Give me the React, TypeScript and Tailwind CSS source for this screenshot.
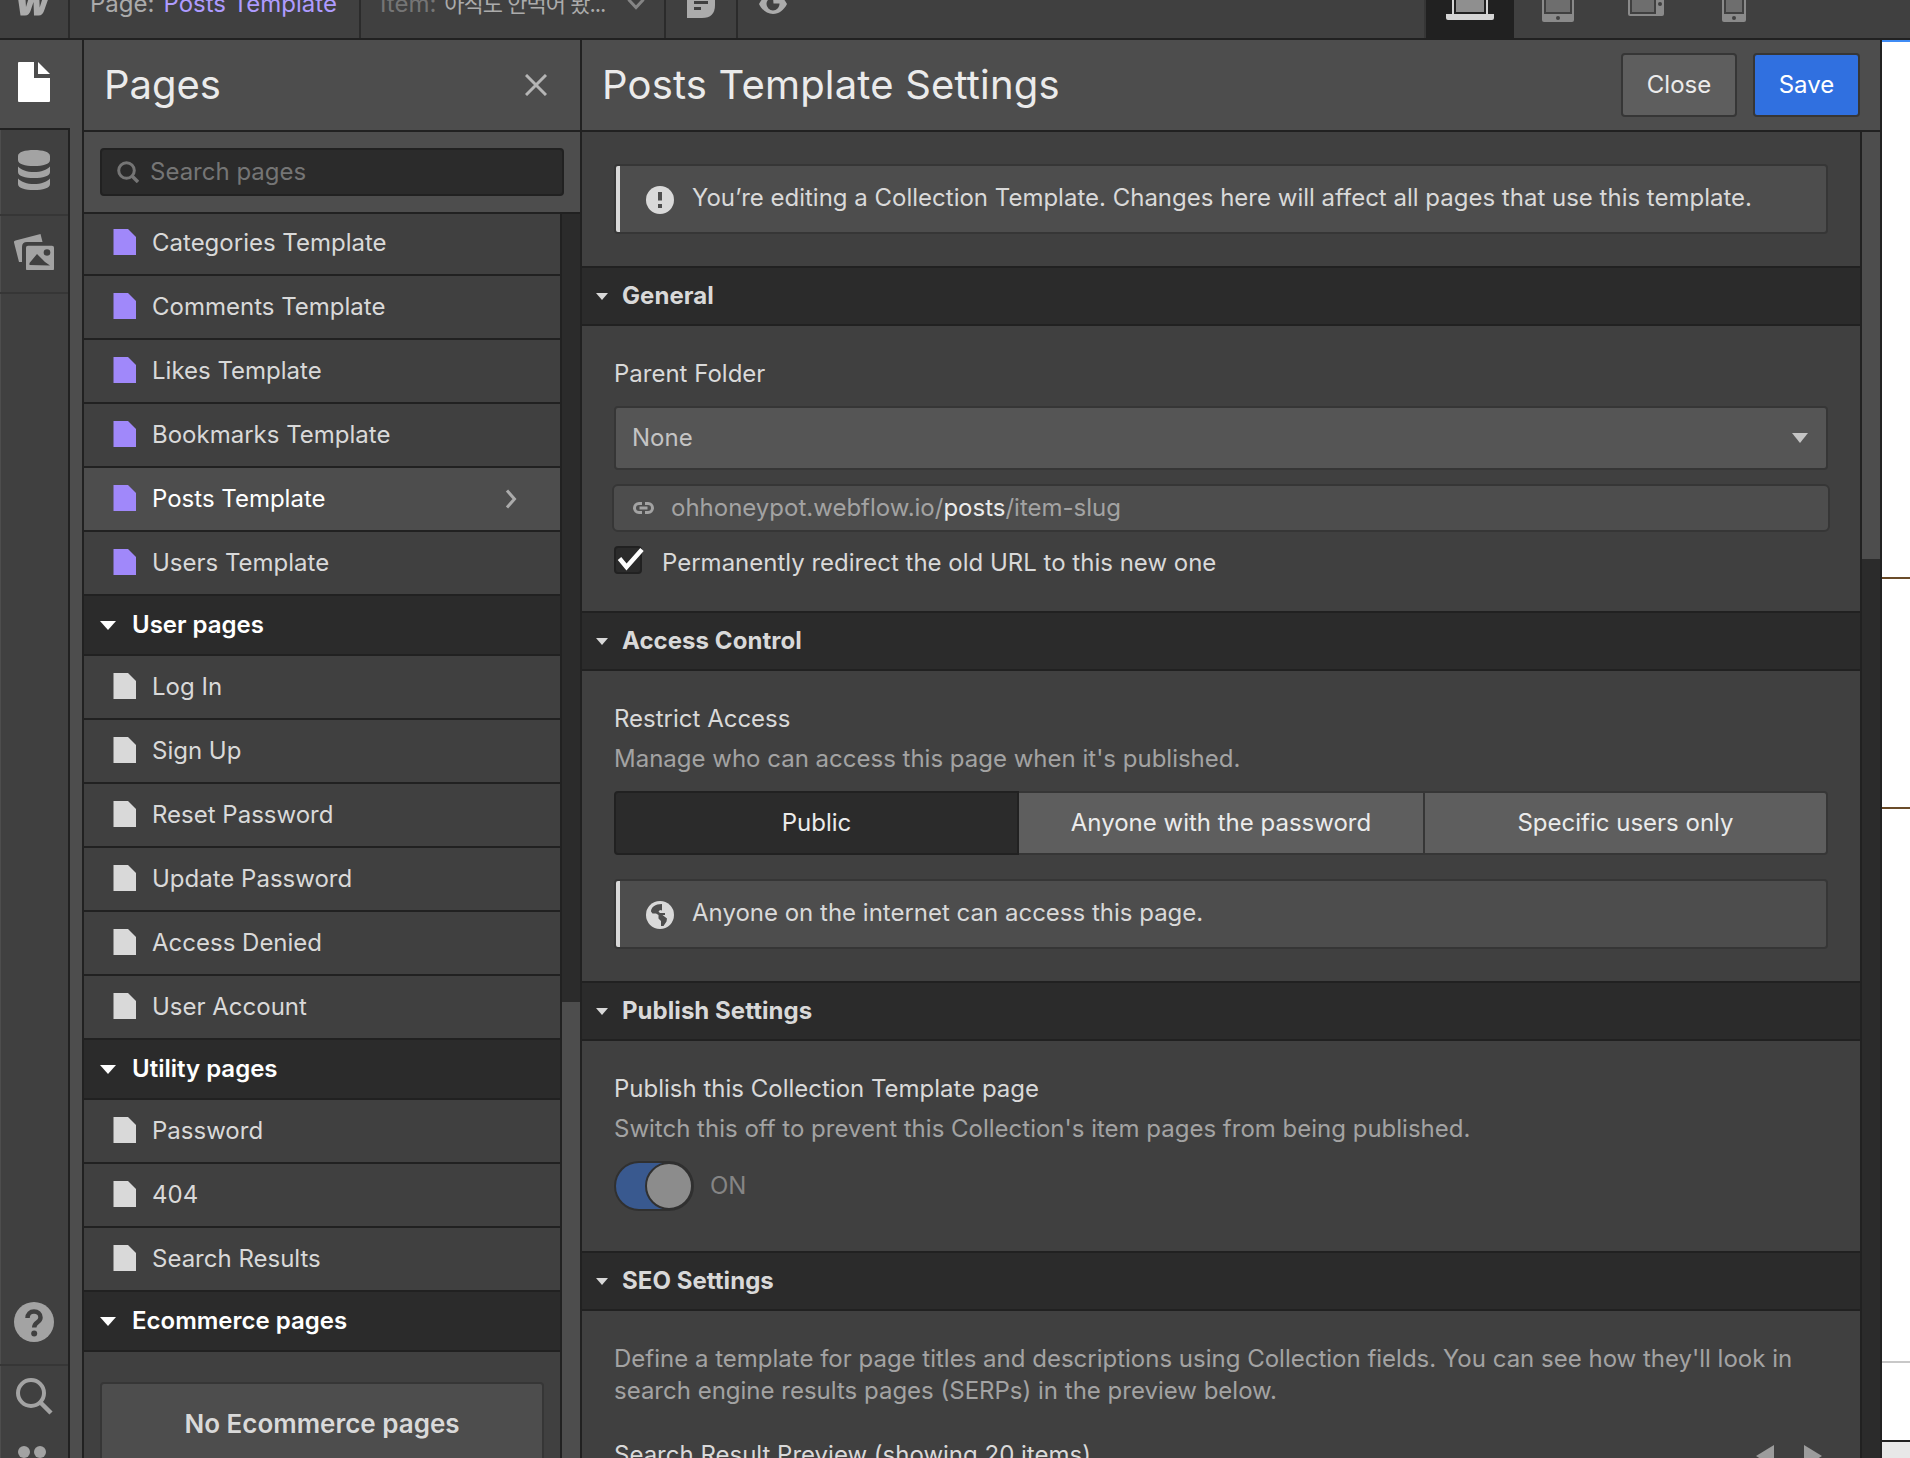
import React from "react";

interface PageRowProps {
  label: string;
  template?: boolean;
  active?: boolean;
}

const TEMPLATE_PAGES = [
  "Categories Template",
  "Comments Template",
  "Likes Template",
  "Bookmarks Template",
  "Posts Template",
  "Users Template",
];

const USER_PAGES = [
  "Log In",
  "Sign Up",
  "Reset Password",
  "Update Password",
  "Access Denied",
  "User Account",
];

const UTILITY_PAGES = ["Password", "404", "Search Results"];

const PageRow: React.FC<PageRowProps> = ({ label, template, active }) => (
  <div
    className={`flex h-16 shrink-0 items-center border-b-2 border-[#212121] pl-[29px] pr-[43px] ${
      active ? "bg-[#4d4d4d] text-white" : "bg-[#404040] text-[#d9d9d9]"
    }`}
  >
    <svg
      width="23"
      height="26"
      viewBox="0 0 23 26"
      className={`-mt-[2px] ${template ? "text-[#a088fa]" : "text-[#d9d9d9]"}`}
    >
      <path d="M.5 0H15l8 8v18H.5z" fill="currentColor" />
    </svg>
    <span className="ml-4 flex-1">{label}</span>
    {active && (
      <svg width="12" height="20" viewBox="0 0 12 20" className="text-[#ababab]">
        <path
          d="M2 1.500l7.500 8.500L2 18.500"
          fill="none"
          stroke="currentColor"
          strokeWidth="3"
        />
      </svg>
    )}
  </div>
);

const GroupHeader: React.FC<{ label: string }> = ({ label }) => (
  <div className="flex h-[60px] shrink-0 items-center border-b-2 border-[#212121] bg-[#2b2b2b] pl-4 font-semibold text-white">
    <svg width="16" height="9" viewBox="0 0 16 9">
      <path d="M0 0h16L8 9z" fill="currentColor" />
    </svg>
    <span className="ml-4">{label}</span>
  </div>
);

const SectionHeader: React.FC<{ label: string }> = ({ label }) => (
  <div className="flex h-[60px] shrink-0 items-center border-y-2 border-[#212121] bg-[#2b2b2b] pl-[14px] font-bold tracking-[0.05px] text-[#d9d9d9]">
    <svg width="12" height="7" viewBox="0 0 12 7">
      <path d="M0 0h12L6 7z" fill="currentColor" />
    </svg>
    <span className="ml-[14px]">{label}</span>
  </div>
);

const Notice: React.FC<{ icon: React.ReactNode; children: React.ReactNode }> = ({
  icon,
  children,
}) => (
  <div className="flex h-[70px] shrink-0 overflow-hidden rounded-[4px] border-2 border-[#363636] bg-[#4d4d4d] text-[#d9d9d9]">
    <div className="w-1 bg-[#d9d9d9]" />
    <div className="flex flex-1 items-center pl-[26px]">
      <div className="mt-[2px]">{icon}</div>
      <span className="-mt-[2px] ml-[18px]">{children}</span>
    </div>
  </div>
);

const AlertIcon = () => (
  <svg width="28" height="28" viewBox="0 0 28 28">
    <circle cx="14" cy="14" r="14" fill="#d9d9d9" />
    <path d="M12 6h4v8.500h-4zM12 18h4v4h-4z" fill="#4d4d4d" />
  </svg>
);

const GlobeIcon = () => (
  <svg width="28" height="28" viewBox="0 0 28 28">
    <circle cx="14" cy="14" r="14" fill="#d9d9d9" />
    <path
      d="M5 10.500C5 6.500 9 3 16 3v6.500l-2-.5-1.500 1.500 1.500 1.500h5v2h-2.500l4.500 3.500-.500 3L17.500 25H15v-5l-2.500-2.500V14L10 12.500H6.500z"
      fill="#4d4d4d"
    />
  </svg>
);

const TopBar = () => (
  <div className="h-10 shrink-0 overflow-hidden border-b-2 border-[#212121] bg-[#404040]">
    <div className="-mt-[30px] flex h-[68px] items-center text-[#ababab]">
      <div className="flex h-full w-[70px] items-center border-r-2 border-[#2b2b2b] pl-[17px]">
        <svg width="35" height="26" viewBox="0 0 35 26" className="mt-[-3px]">
          <path
            d="M25.500 8.500l-2.800 9L22 1h-3.500c-3.500 0-5 2-6 4.500L9 17 8.300 6C8 3 5.800 1 3 1H0l3.500 24.500H8c3 0 4.500-2 5.500-4.500l3-9 .5 13.500h4.500c3 0 4.500-2 5.500-4.500L34 1h-3.500c-3 0-4 3-5 7.500z"
            fill="currentColor"
          />
        </svg>
      </div>
      <div className="flex h-full w-[291px] items-center border-r-2 border-[#2b2b2b] pl-5">
        <span>Page:</span>
        <span className="ml-[9px] text-[#ae9bff]">Posts Template</span>
      </div>
      <div className="flex h-full w-[305px] items-center border-r-2 border-[#2b2b2b] pl-[19px]">
        <span className="text-[#757575]">Item:</span>
        <span className="ml-[8px] w-[166px] whitespace-nowrap text-[22px] tracking-[-1px]">
          아직도 안먹어 봤...
        </span>
        <svg width="18" height="12" viewBox="0 0 18 12" className="ml-[17px] mt-[-1px]">
          <path d="M1.500 1.500L9 9.500l7.500-8" fill="none" stroke="#858585" strokeWidth="3" />
        </svg>
      </div>
      <div className="flex h-full w-[72px] items-center border-r-2 border-[#2b2b2b] pl-[21px]">
        <svg width="28" height="28" viewBox="0 0 28 28">
          <path d="M2 0h20q6 0 6 6v9q0 13-13 13H0V2q0-2 2-2z" fill="currentColor" />
          <path d="M7 5h14v3H7zM7 11h14v3H7zM7 17h7v3H7z" fill="#404040" />
        </svg>
      </div>
      <div className="flex-1 pl-[21px]">
        <svg width="28" height="20" viewBox="0 0 28 20">
          <path
            d="M14 0C8 0 3 4 0 10c3 6 8 10 14 10s11-4 14-10C25 4 20 0 14 0zm0 16.500a6.500 6.500 0 01-6.500-6.500c0-3.600 2.900-6.500 6.500-6.500l.5 6h6c0 4-2.900 7-6.500 7z"
            fill="currentColor"
          />
        </svg>
      </div>
      <div className="flex h-full w-[486px]">
        <div className="flex h-full w-[90px] items-center justify-center border-l-2 border-[#363636] bg-[#212121]">
          <svg width="48" height="32" viewBox="0 0 48 32">
            <path d="M6 0h36v26h6v4q0 2-2 2H2q-2 0-2-2v-4h6z" fill="#d5d5d5" />
            <path d="M8 2h32v24H8z" fill="#212121" />
            <path d="M10 4h28v20H10z" fill="#8f8f8f" />
          </svg>
        </div>
        <div className="flex flex-1 items-center pl-[28px]">
          <svg width="32" height="40" viewBox="0 0 32 40" className="-mt-1">
            <rect width="32" height="40" rx="2" fill="#8a8a8a" />
            <path d="M2 6h28v26H2z" fill="#404040" />
            <path d="M4 8h24v22H4z" fill="#6e6e6e" />
            <circle cx="16" cy="36" r="2" fill="#404040" />
          </svg>
          <svg width="36" height="28" viewBox="0 0 36 28" className="ml-[54px] mt-[-4px]">
            <rect width="36" height="28" rx="2" fill="#8a8a8a" />
            <path d="M2 2h26v24H2z" fill="#404040" />
            <path d="M4 4h22v20H4z" fill="#6e6e6e" />
            <circle cx="32" cy="16" r="2" fill="#404040" />
          </svg>
          <svg width="24" height="40" viewBox="0 0 24 40" className="-mt-1 ml-[58px]">
            <rect width="24" height="40" rx="2" fill="#8a8a8a" />
            <path d="M2 6h20v26H2z" fill="#404040" />
            <path d="M4 8h16v22H4z" fill="#6e6e6e" />
            <circle cx="12" cy="36" r="2" fill="#404040" />
          </svg>
        </div>
      </div>
    </div>
  </div>
);

const Rail = () => (
  <div className="flex w-[84px] shrink-0 flex-col border-r-2 border-[#212121] bg-[#4d4d4d] text-[#a3a3a3]">
    <div className="flex h-[88px] shrink-0 items-center pl-[18px] text-white">
      <svg width="32" height="40" viewBox="0 0 32 40" className="mt-[-4px]">
        <path d="M1 0h15v16h16v23q0 1-1 1H1q-1 0-1-1V1q0-1 1-1z" fill="currentColor" />
        <path d="M20 0l12 12H20z" fill="currentColor" />
      </svg>
    </div>
    <div className="flex w-[70px] flex-1 flex-col border-r-2 border-t-2 border-[#212121] bg-[#404040] shadow-[inset_1px_0_#4d4d4d]">
      <div className="flex h-[86px] shrink-0 items-center border-b-2 border-[#363636] pl-[18px]">
        <svg width="32" height="40" viewBox="0 0 32 40" className="mt-[-4px]">
          <path
            d="M0 6C0 2 7 0 16 0s16 2 16 6v4c0 4-7 6-16 6S0 14 0 10zM0 16.500C3 20 9 22 16 22s13-2 16-5.500V22c0 4-7 6-16 6S0 26 0 22zM0 28.500C3 32 9 34 16 34s13-2 16-5.500V34c0 4-7 6-16 6S0 38 0 34z"
            fill="currentColor"
          />
        </svg>
      </div>
      <div className="flex h-[78px] shrink-0 items-center border-b-2 border-[#363636] pl-[14px]">
        <svg width="40" height="36" viewBox="0 0 40 36" className="mt-[-4px]">
          <path d="M1.500 6.500L26.500 0l2 8H13q-5 0-5 5v15H5L0 8.500q-.5-1.500 1.500-2z" fill="currentColor" />
          <path
            d="M14 12h24q2 0 2 2v26q0 2-2 2H14q-2 0-2-2V14q0-2 2-2z"
            transform="translate(0 2) scale(1 .82)"
            fill="currentColor"
          />
          <path d="M15.500 31v-2L23 20l5 5 3 3 5 3.500z" fill="#404040" />
          <circle cx="33" cy="18.500" r="3.300" fill="#404040" />
        </svg>
      </div>
      <div className="flex-1" />
      <div className="flex h-[86px] shrink-0 items-center border-b-2 border-[#363636] pl-[14px]">
        <svg width="40" height="40" viewBox="0 0 40 40">
          <circle cx="20" cy="20" r="20" fill="currentColor" />
          <path
            d="M13.500 16c0-4 2.700-6.500 6.500-6.500s6.500 2.500 6.500 6c0 5-6.300 4.500-6.300 10"
            fill="none"
            stroke="#404040"
            strokeWidth="4.500"
          />
          <circle cx="20.200" cy="31.500" r="3" fill="#404040" />
        </svg>
      </div>
      <div className="flex h-[92px] shrink-0 flex-col overflow-hidden pl-[16px] pt-3">
        <svg width="37" height="37" viewBox="0 0 37 37" className="shrink-0">
          <circle cx="15" cy="15" r="13" fill="none" stroke="currentColor" strokeWidth="4" />
          <path d="M24 24l11 11" stroke="currentColor" strokeWidth="4.500" />
        </svg>
        <svg width="40" height="30" viewBox="0 0 40 30" className="mt-[31px] shrink-0">
          <circle cx="8" cy="6" r="6" fill="currentColor" />
          <circle cx="24" cy="6" r="6" fill="currentColor" />
        </svg>
      </div>
    </div>
  </div>
);

const PagesPanel = () => (
  <div className="flex w-[498px] shrink-0 flex-col border-r-2 border-[#212121] bg-[#404040]">
    <div className="flex h-[92px] shrink-0 items-center justify-between border-b-2 border-[#212121] bg-[#4d4d4d] pl-5 pr-[33px]">
      <h1 className="text-[40px] text-[#ebebeb]">Pages</h1>
      <svg width="22" height="22" viewBox="0 0 22 22">
        <path d="M1 1l20 20M21 1L1 21" stroke="#b5b5b5" strokeWidth="3" />
      </svg>
    </div>
    <div className="z-10 h-[82px] shrink-0 border-b-2 border-[#212121] bg-[#4d4d4d] px-4 pt-4">
      <div className="flex h-12 items-center rounded-[4px] border-2 border-[#212121] bg-[#2b2b2b] pl-[15px]">
        <svg width="22" height="22" viewBox="0 0 22 22">
          <circle cx="9.500" cy="9.500" r="7.800" fill="none" stroke="#757575" strokeWidth="3" />
          <path d="M15 15l6 6" stroke="#757575" strokeWidth="3.500" />
        </svg>
        <span className="ml-[11px] text-[#757575]">Search pages</span>
      </div>
    </div>
    <div className="-mt-[2px] flex min-h-0 flex-1">
      <div className="flex w-[478px] shrink-0 flex-col overflow-hidden border-r-2 border-[#212121]">
        {TEMPLATE_PAGES.map((p) => (
          <PageRow key={p} label={p} template active={p === "Posts Template"} />
        ))}
        <GroupHeader label="User pages" />
        {USER_PAGES.map((p) => (
          <PageRow key={p} label={p} />
        ))}
        <GroupHeader label="Utility pages" />
        {UTILITY_PAGES.map((p) => (
          <PageRow key={p} label={p} />
        ))}
        <GroupHeader label="Ecommerce pages" />
        <div className="shrink-0 px-4 pt-[30px]">
          <div className="h-[120px] rounded-[4px] border-2 border-[#363636] bg-[#4d4d4d] pt-6 text-center text-[26px] leading-8 font-semibold text-[#d9d9d9]">
            No Ecommerce pages
          </div>
        </div>
      </div>
      <div className="flex flex-1 flex-col bg-[#2b2b2b]">
        <div className="mt-[790px] flex-1 bg-[#4d4d4d]" />
      </div>
    </div>
  </div>
);

const SettingsPanel = () => (
  <div className="flex w-[1300px] shrink-0 flex-col border-r-2 border-[#212121] bg-[#404040]">
    <div className="flex h-[92px] shrink-0 items-center border-b-2 border-[#212121] bg-[#4d4d4d] pl-5 pr-5">
      <h2 className="flex-1 text-[40px] tracking-[0.18px] text-[#ebebeb]">
        Posts Template Settings
      </h2>
      <button className="h-16 w-[116px] rounded-[4px] border-2 border-[#363636] bg-[#5e5e5e] text-[#ebebeb]">
        Close
      </button>
      <button className="ml-4 h-16 w-[107px] rounded-[4px] border-2 border-[#363636] bg-[#3070e0] text-white">
        Save
      </button>
    </div>
    <div className="flex min-h-0 flex-1">
      <div className="flex w-[1280px] shrink-0 flex-col overflow-hidden border-r-2 border-[#212121]">
        <div className="px-8 py-8">
          <Notice icon={<AlertIcon />}>
            You’re editing a Collection Template. Changes here will affect all pages that use this
            template.
          </Notice>
        </div>

        <SectionHeader label="General" />
        <div className="h-[285px] shrink-0 px-8 pt-8 text-[#d9d9d9]">
          <div className="leading-8">Parent Folder</div>
          <div className="mt-4 flex h-16 items-center justify-between rounded-[4px] border-2 border-[#363636] bg-[#555555] pl-4 pr-[18px] text-[#c4c4c4]">
            <span>None</span>
            <svg width="16" height="10" viewBox="0 0 16 10">
              <path d="M0 0h16L8 10z" fill="currentColor" />
            </svg>
          </div>
          <div className="-mx-[2px] mt-[14px] flex h-12 items-center rounded-[6px] border-2 border-[#363636] bg-[#4d4d4d] pl-[19px] text-[#a3a3a3]">
            <svg width="21" height="12" viewBox="0 0 21 12">
              <path
                d="M9 1.500H6a4.500 4.500 0 000 9h3M12 1.500h3a4.500 4.500 0 010 9h-3M6.500 6h8"
                fill="none"
                stroke="currentColor"
                strokeWidth="3"
              />
            </svg>
            <span className="ml-[17px]">
              ohhoneypot.webflow.io/<span className="text-[#ebebeb]">posts</span>/item-slug
            </span>
          </div>
          <div className="mt-[14px] flex">
            <div className="h-7 w-7 rounded-[4px] border-2 border-[#212121] bg-[#2b2b2b]">
              <svg width="28" height="24" viewBox="0 0 28 24" className="overflow-visible">
                <path d="M3.500 10.500l7 8.500L26 1.500" fill="none" stroke="#fff" strokeWidth="4.500" />
              </svg>
            </div>
            <span className="ml-5 mt-px leading-8">
              Permanently redirect the old URL to this new one
            </span>
          </div>
        </div>

        <SectionHeader label="Access Control" />
        <div className="h-[310px] shrink-0 px-8 pt-8">
          <div className="leading-8 text-[#d9d9d9]">Restrict Access</div>
          <div className="mt-2 leading-8 text-[#a3a3a3]">
            Manage who can access this page when it's published.
          </div>
          <div className="mt-4 flex h-16 text-[#ebebeb]">
            <button className="w-[405px] rounded-l-[4px] border-2 border-[#212121] bg-[#2b2b2b]">
              Public
            </button>
            <button className="w-[406px] border-y-2 border-r-2 border-[#363636] bg-[#5e5e5e]">
              Anyone with the password
            </button>
            <button className="flex-1 rounded-r-[4px] border-y-2 border-r-2 border-[#363636] bg-[#5e5e5e]">
              Specific users only
            </button>
          </div>
          <div className="mt-6">
            <Notice icon={<GlobeIcon />}>Anyone on the internet can access this page.</Notice>
          </div>
        </div>

        <SectionHeader label="Publish Settings" />
        <div className="h-[210px] shrink-0 px-8 pt-8">
          <div className="leading-8 text-[#d9d9d9]">Publish this Collection Template page</div>
          <div className="mt-2 leading-8 text-[#a3a3a3]">
            Switch this off to prevent this Collection's item pages from being published.
          </div>
          <div className="mt-4 flex items-center text-[#858585]">
            <div className="flex h-[50px] w-20 items-center justify-end rounded-full border-2 border-[#303030] bg-[#39598f]">
              <div className="-mr-px h-12 w-12 shrink-0 rounded-full border-2 border-[#303030] bg-[#8c8c8c]" />
            </div>
            <span className="ml-4">ON</span>
          </div>
        </div>

        <SectionHeader label="SEO Settings" />
        <div className="shrink-0 px-8 pt-8">
          <div className="leading-8 text-[#a3a3a3]">
            Define a template for page titles and descriptions using Collection fields. You can see
            how they'll look in
            <br />
            search engine results pages (SERPs) in the preview below.
          </div>
          <div className="mt-8 flex justify-between pr-[6px] leading-8 text-[#d9d9d9]">
            <span>Search Result Preview (showing 20 items)</span>
            <div className="mt-[6px] flex gap-[30px]">
              <svg width="18" height="22" viewBox="0 0 18 22">
                <path d="M18 0v22L0 11z" fill="#9c9c9c" />
              </svg>
              <svg width="18" height="22" viewBox="0 0 18 22">
                <path d="M0 0v22l18-11z" fill="#9c9c9c" />
              </svg>
            </div>
          </div>
        </div>
      </div>
      <div className="flex-1 bg-[#2b2b2b]">
        <div className="h-[427px] bg-[#4d4d4d]" />
      </div>
    </div>
  </div>
);

// Sliver of the site canvas visible beside the panels
const Canvas = () => (
  <div className="flex flex-1 flex-col border-t-2 border-[#3f8cf5] bg-white">
    <div className="h-[537px] shrink-0 border-b-2 border-[#6b4c2a]" />
    <div className="h-[230px] shrink-0 border-b-2 border-[#6b4c2a]" />
    <div className="h-[554px] shrink-0 border-b-2 border-[#c8c8c8]" />
    <div className="h-[79px] shrink-0 border-b-2 border-[#212121]" />
    <div className="flex-1 bg-[#e8e8e8]" />
  </div>
);

export default function App() {
  return (
    <div className="flex h-[1458px] w-[1910px] flex-col overflow-hidden bg-[#404040] font-['Inter','Noto_Sans_CJK_KR',sans-serif] text-[24px] leading-8">
      <TopBar />
      <div className="flex min-h-0 flex-1">
        <Rail />
        <PagesPanel />
        <SettingsPanel />
        <Canvas />
      </div>
    </div>
  );
}
